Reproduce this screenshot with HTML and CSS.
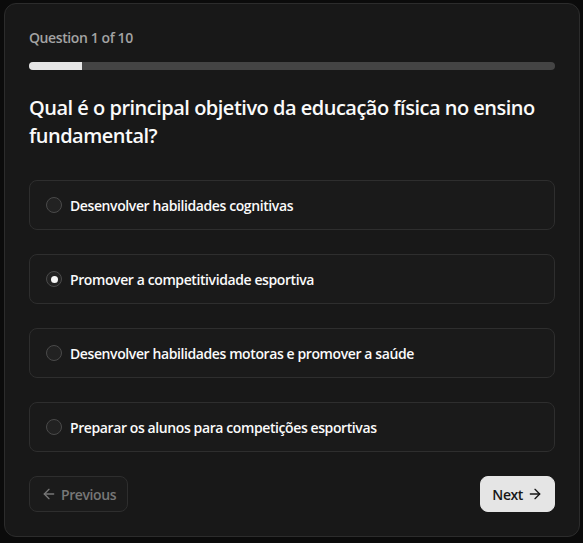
FILE: index.html
```html
<!DOCTYPE html>
<html lang="pt">
<head>
<meta charset="utf-8">
<link rel="stylesheet" href="styles.css">
</head>
<body>
<div class="card">
  <div class="counter">Question 1 of 10</div>
  <div class="progress"><div class="progress-fill" style="width:10%"></div></div>
  <h2 class="question">Qual é o principal objetivo da educação física no ensino fundamental?</h2>
  <div class="options">
    <label class="option"><span class="radio"></span><span class="opt-text">Desenvolver habilidades cognitivas</span></label>
    <label class="option"><span class="radio checked"></span><span class="opt-text">Promover a competitividade esportiva</span></label>
    <label class="option"><span class="radio"></span><span class="opt-text">Desenvolver habilidades motoras e promover a saúde</span></label>
    <label class="option"><span class="radio"></span><span class="opt-text">Preparar os alunos para competições esportivas</span></label>
  </div>
  <div class="nav">
    <button class="btn btn-prev"><svg width="16" height="16" viewBox="0 0 24 24" fill="none" stroke="currentColor" stroke-width="2" stroke-linecap="round" stroke-linejoin="round"><path d="M19 12H5"/><path d="M12 19l-7-7 7-7"/></svg>Previous</button>
    <button class="btn btn-next">Next<svg width="16" height="16" viewBox="0 0 24 24" fill="none" stroke="currentColor" stroke-width="2" stroke-linecap="round" stroke-linejoin="round"><path d="M5 12h14"/><path d="M12 5l7 7-7 7"/></svg></button>
  </div>
</div>
</body>
</html>
```
FILE: styles.css
```css
* { box-sizing: border-box; }
html, body { margin: 0; padding: 0; }
body {
  background: #0b0b0b;
  font-family: "Open Sans", "Noto Sans", sans-serif;
  color: #fafafa;
  padding: 3px 3px 0 4px;
  width: 583px;
  height: 543px;
}
.card {
  width: 576px;
  height: 534px;
  background: #181818;
  border: 1px solid #2c2c2c;
  border-radius: 12px;
  padding: 24px;
  display: flex;
  flex-direction: column;
}
.counter {
  font-size: 14px;
  line-height: 20px;
  font-weight: 600;
  color: #a3a3a3;
  letter-spacing: -0.4px;
}
.progress {
  margin-top: 14px;
  height: 8px;
  background: #444;
  border-radius: 4px;
  overflow: hidden;
}
.progress-fill {
  height: 100%;
  background: #e5e5e5;
}
.question {
  margin: 24px 0 0 0;
  font-size: 20px;
  line-height: 28px;
  font-weight: 600;
  color: #fafafa;
  letter-spacing: -0.5px;
}
.options {
  margin-top: 30px;
  display: flex;
  flex-direction: column;
  gap: 24px;
}
.option {
  display: flex;
  align-items: center;
  gap: 8px;
  height: 50px;
  padding: 0 16px;
  border: 1px solid #2e2e2e;
  border-radius: 8px;
  background: #1a1a1a;
}
.radio {
  width: 16px;
  height: 16px;
  border-radius: 50%;
  border: 1px solid #4a4a4a;
  background: #222;
  display: flex;
  align-items: center;
  justify-content: center;
  flex: none;
}
.radio.checked::after {
  content: "";
  width: 7px;
  height: 7px;
  border-radius: 50%;
  background: #f5f5f5;
}
.opt-text {
  font-size: 14px;
  font-weight: 600;
  color: #fafafa;
  letter-spacing: -0.4px;
}
.nav {
  margin-top: 24px;
  display: flex;
  justify-content: space-between;
}
.btn {
  height: 36px;
  border-radius: 8px;
  font-family: inherit;
  font-size: 14px;
  font-weight: 600;
  letter-spacing: -0.4px;
  display: flex;
  align-items: center;
  gap: 4px;
  padding: 0 11px;
  cursor: pointer;
}
.btn-prev {
  background: #1b1b1b;
  border: 1px solid #2e2e2e;
  color: #777;
}
.btn-next {
  background: #e5e5e5;
  border: 1px solid #e5e5e5;
  color: #171717;
}
```
